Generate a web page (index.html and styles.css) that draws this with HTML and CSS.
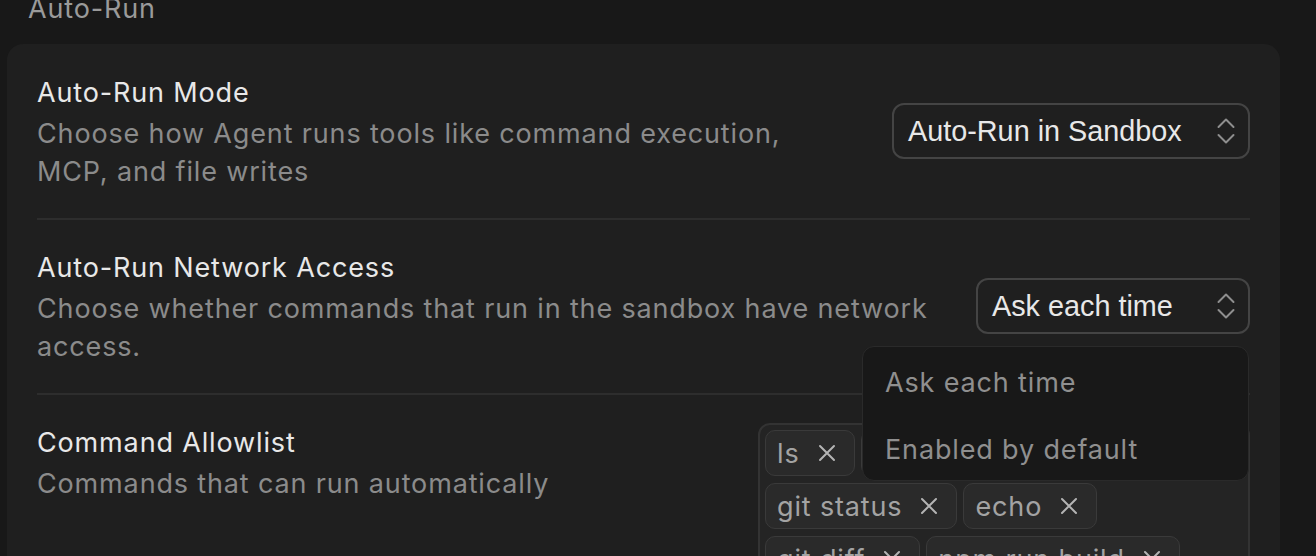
FILE: index.html
```html
<!DOCTYPE html>
<html>
<head>
<meta charset="utf-8">
<link rel="stylesheet" href="styles.css">
</head>
<body>
<div class="heading">Auto-Run</div>
<div class="card">
  <div class="row">
    <div class="text">
      <div class="title">Auto-Run Mode</div>
      <div class="desc">Choose how Agent runs tools like command execution, MCP, and file writes</div>
    </div>
    <div class="control">
      <div class="select select-mode">
        <span>Auto-Run in Sandbox</span>
        <svg class="chev" viewBox="0 0 18 28" width="18" height="28"><path d="M1.5 10 L9 2.5 L16.5 10 M1.5 18 L9 25.5 L16.5 18" fill="none" stroke="#8e8e8e" stroke-width="2" stroke-linecap="round" stroke-linejoin="round"/></svg>
      </div>
    </div>
  </div>
  <div class="row">
    <div class="text">
      <div class="title">Auto-Run Network Access</div>
      <div class="desc">Choose whether commands that run in the sandbox have network access.</div>
    </div>
    <div class="control">
      <div class="select select-net">
        <span>Ask each time</span>
        <svg class="chev" viewBox="0 0 18 28" width="18" height="28"><path d="M1.5 10 L9 2.5 L16.5 10 M1.5 18 L9 25.5 L16.5 18" fill="none" stroke="#8e8e8e" stroke-width="2" stroke-linecap="round" stroke-linejoin="round"/></svg>
      </div>
      <div class="menu">
        <div class="menu-item">Ask each time</div>
        <div class="menu-item">Enabled by default</div>
      </div>
    </div>
  </div>
  <div class="row row-top">
    <div class="text">
      <div class="title">Command Allowlist</div>
      <div class="desc">Commands that can run automatically</div>
    </div>
    <div class="tags">
      <div class="tag">ls<svg viewBox="0 0 18 18" width="18" height="18"><path d="M2 2 L16 16 M16 2 L2 16" stroke="#b4b4b4" stroke-width="2" stroke-linecap="round"/></svg></div>
      <div class="tag">npm install<svg viewBox="0 0 18 18" width="18" height="18"><path d="M2 2 L16 16 M16 2 L2 16" stroke="#b4b4b4" stroke-width="2" stroke-linecap="round"/></svg></div>
      <div class="tag">git status<svg viewBox="0 0 18 18" width="18" height="18"><path d="M2 2 L16 16 M16 2 L2 16" stroke="#b4b4b4" stroke-width="2" stroke-linecap="round"/></svg></div>
      <div class="tag">echo<svg viewBox="0 0 18 18" width="18" height="18"><path d="M2 2 L16 16 M16 2 L2 16" stroke="#b4b4b4" stroke-width="2" stroke-linecap="round"/></svg></div>
      <div class="tag">git diff<svg viewBox="0 0 18 18" width="18" height="18"><path d="M2 2 L16 16 M16 2 L2 16" stroke="#b4b4b4" stroke-width="2" stroke-linecap="round"/></svg></div>
      <div class="tag">npm run build<svg viewBox="0 0 18 18" width="18" height="18"><path d="M2 2 L16 16 M16 2 L2 16" stroke="#b4b4b4" stroke-width="2" stroke-linecap="round"/></svg></div>
    </div>
  </div>
</div>
</body>
</html>
```
FILE: styles.css
```css
html, body {
  margin: 0;
  padding: 0;
  background: #181818;
  height: 556px;
  overflow: hidden;
}
body {
  font-family: Inter, "Noto Sans", sans-serif;
  font-size: 27px;
  letter-spacing: 0.85px;
  color: #e4e4e4;
}
.heading {
  margin-top: -6px;
  padding-left: 28px;
  line-height: 30px;
  color: #9a9a9a;
}
.card {
  margin: 20px 36px 0 7px;
  padding: 1px 30px 0;
  background: #1f1f1f;
  border-radius: 16px;
  height: 600px;
}
.row {
  display: flex;
  align-items: center;
  justify-content: space-between;
  gap: 40px;
  padding: 26px 0 27px;
  border-top: 2px solid #2d2d2d;
}
.row:first-child {
  border-top: none;
}
.row-top {
  align-items: flex-start;
}
.text {
  flex: 1;
  min-width: 0;
}
.title {
  line-height: 44px;
  color: #e8e8e8;
}
.desc {
  line-height: 38px;
  color: #8b8b8b;
}
.control {
  position: relative;
  flex: none;
}
.select {
  box-sizing: border-box;
  height: 56px;
  display: flex;
  align-items: center;
  justify-content: space-between;
  padding: 0 13px 0 14px;
  border: 2px solid #444444;
  border-radius: 12px;
  font-family: "Liberation Sans", Arial, sans-serif;
  font-size: 28.8px;
  letter-spacing: 0;
  color: #e8e8e8;
}
.select-mode { width: 358px; }
.select-net { width: 274px; }
.chev { flex: none; }
.menu {
  position: absolute;
  top: calc(100% + 12px);
  right: 1px;
  width: 387px;
  box-sizing: border-box;
  padding: 2px 0 0;
  height: 135px;
  background: #181818;
  border: 1px solid #2a2a2a;
  border-radius: 12px;
  z-index: 5;
}
.menu-item {
  line-height: 67px;
  padding-left: 22px;
  color: #8f8f8f;
}
.tags {
  flex: none;
  width: 492px;
  box-sizing: border-box;
  margin-top: 2px;
  height: 200px;
  padding: 5px;
  display: flex;
  flex-wrap: wrap;
  align-content: flex-start;
  gap: 7px 6px;
  background: #242424;
  border: 2px solid #333333;
  border-radius: 12px;
}
.tag {
  box-sizing: border-box;
  height: 46px;
  display: flex;
  align-items: center;
  gap: 18px;
  padding: 0 18px 0 11px;
  background: #2a2a2a;
  border: 1.5px solid #3a3a3a;
  border-radius: 10px;
  color: #a3a3a3;
}
```
